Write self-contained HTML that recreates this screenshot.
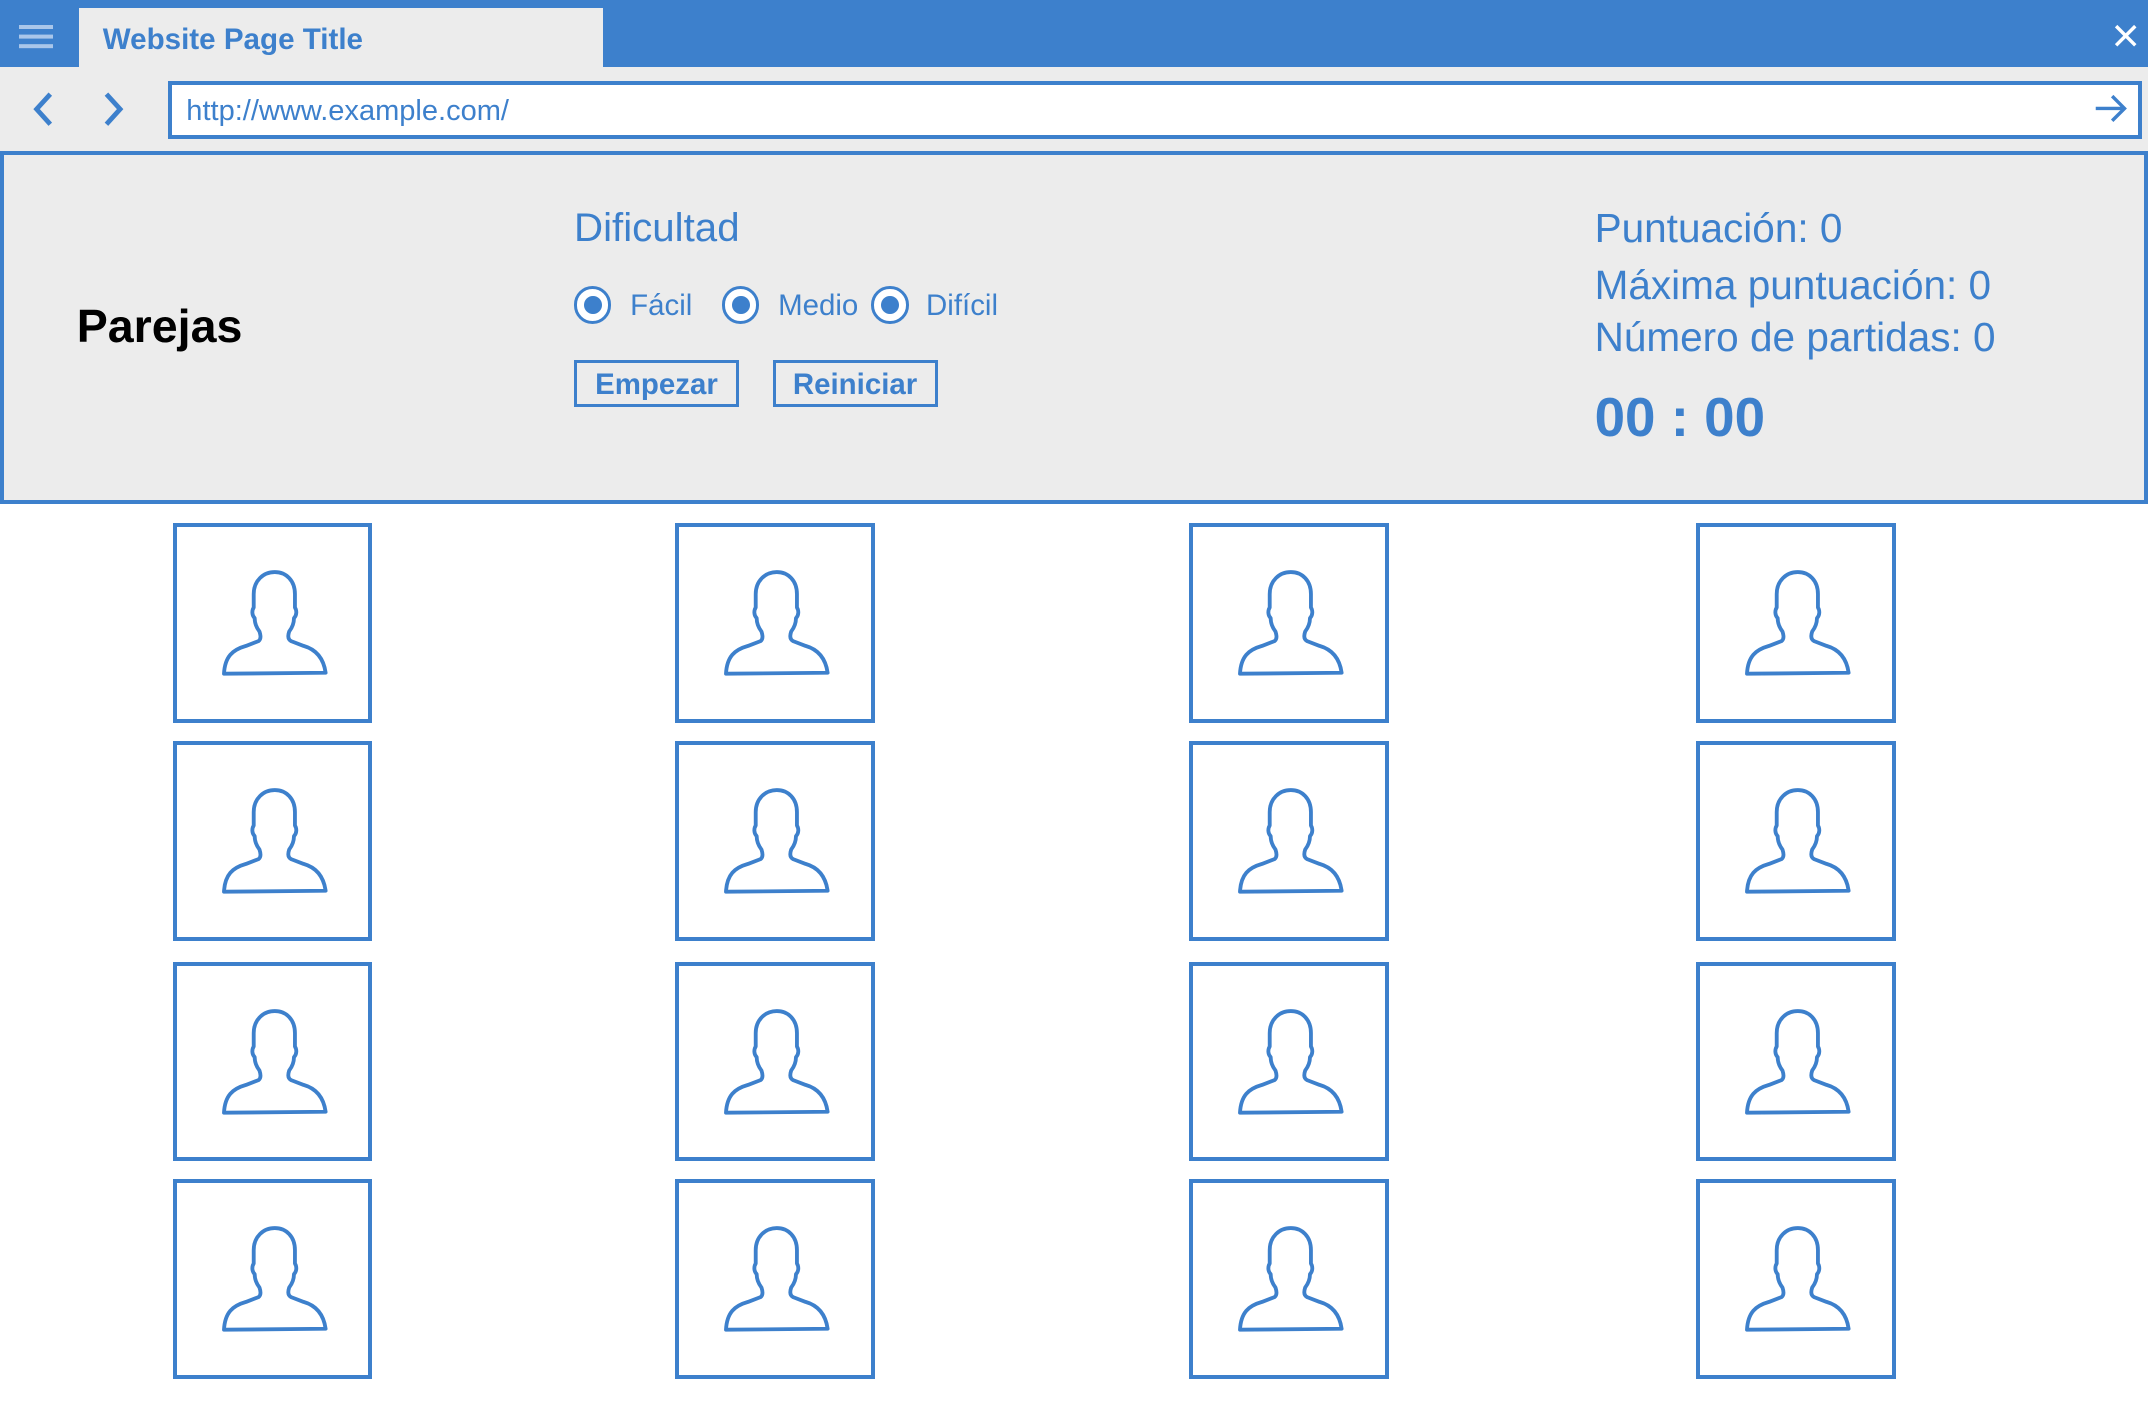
<!DOCTYPE html>
<html><head><meta charset="utf-8"><style>
html,body{margin:0;padding:0;background:#fff;overflow:hidden}
body{width:1568px;height:1028px;zoom:1.36990;position:relative;font-family:"Liberation Sans",Arial,sans-serif;color:#3d80cc}
.abs{position:absolute}
.card{position:absolute;width:140px;height:140px;border:3px solid #3d80cc;background:#fff}
.card svg{position:absolute;left:0;top:0;width:140px;height:140px}
.btn{position:absolute;height:30px;border:2.5px solid #3d80cc;font-weight:bold;font-size:21.5px;line-height:32px;text-align:center}
.radio{position:absolute;width:23px;height:23px;border:2.5px solid #3d80cc;border-radius:50%;background:#fff}
.radio:after{content:"";position:absolute;left:5px;top:5px;width:13px;height:13px;border-radius:50%;background:#3d80cc}
</style></head><body>
<div class="abs" style="left:0;top:0;width:1568px;height:49px;background:#3d80cc"></div>
<div class="abs" style="left:14px;top:18px;width:25px;height:3px;background:#a9c6ea;box-shadow:0 7px 0 #a9c6ea,0 14px 0 #a9c6ea"></div>
<div class="abs" style="left:58px;top:6px;width:382px;height:43px;background:#ececec"></div>
<div class="abs" style="left:75px;top:17px;font-size:21.6px;font-weight:bold">Website Page Title</div>
<svg class="abs" style="left:1542px;top:16px" width="20" height="20" viewBox="0 0 20 20"><path d="M3 3L17 17M17 3L3 17" stroke="#fff" stroke-width="2.5"/></svg>
<div class="abs" style="left:0;top:49px;width:1568px;height:61px;background:#ececec"></div>
<svg class="abs" style="left:20px;top:66px" width="80" height="28" viewBox="0 0 80 28"><path d="M17 3L7 14L17 25" fill="none" stroke="#3d80cc" stroke-width="3.5"/><path d="M58 3L68 14L58 25" fill="none" stroke="#3d80cc" stroke-width="3.5"/></svg>
<div class="abs" style="left:123px;top:59px;width:1435px;height:37px;border:3px solid #3d80cc;background:#fff"></div>
<div class="abs" style="left:136px;top:69px;font-size:21.2px">http://www.example.com/</div>
<svg class="abs" style="left:1528px;top:67px" width="26" height="24" viewBox="0 0 26 24"><path d="M2 12H23M14 3L23 12L14 21" fill="none" stroke="#3d80cc" stroke-width="2.5"/></svg>
<div class="abs" style="left:0;top:110px;width:1562px;height:252px;border:3px solid #3d80cc;background:#ececec"></div>
<div class="abs" style="left:56px;top:218px;font-size:34px;font-weight:bold;color:#000">Parejas</div>
<div class="abs" style="left:419px;top:150px;font-size:29.4px">Dificultad</div>
<div class="radio" style="left:419px;top:209px"></div><div class="abs" style="left:460px;top:211px;font-size:21.5px">Fácil</div>
<div class="radio" style="left:527px;top:209px"></div><div class="abs" style="left:568px;top:211px;font-size:21.5px">Medio</div>
<div class="radio" style="left:636px;top:209px"></div><div class="abs" style="left:676px;top:211px;font-size:21.5px">Difícil</div>
<div class="btn" style="left:419px;top:263px;width:116px">Empezar</div>
<div class="btn" style="left:564px;top:263px;width:116px">Reiniciar</div>
<div class="abs" style="left:1164px;top:150px;font-size:29.6px">Puntuación: 0</div>
<div class="abs" style="left:1164px;top:191px;font-size:29.6px">Máxima puntuación: 0</div>
<div class="abs" style="left:1164px;top:229px;font-size:29.6px">Número de partidas: 0</div>
<div class="abs" style="left:1164px;top:281px;font-size:40px;font-weight:bold">00 : 00</div>
<div id="g"></div>
<script>
var xs=[126,493,868,1238],ys=[382,541,702,861],h='';
var p='<svg viewBox="0 0 200 200"><path d="M49,153 C50,135 58,128 72,124 L85,119 C88,117 87,112 86,109 C83,105 81,100 81,95 C78,92 78,87 80,84 L80,70 C80,56 90,47 102,47 C114,47 123,56 123,70 L123,84 C125,87 125,92 122,95 C122,100 120,105 117,109 C116,112 115,117 119,119 L132,124 C146,128 153,138 155,152 Z" fill="none" stroke="#3d80cc" stroke-width="4" stroke-linejoin="round"/></svg>';
ys.forEach(function(y){xs.forEach(function(x){h+='<div class="card" style="left:'+x+'px;top:'+y+'px">'+p+'</div>';});});
document.getElementById('g').innerHTML=h;
</script>
</body></html>
